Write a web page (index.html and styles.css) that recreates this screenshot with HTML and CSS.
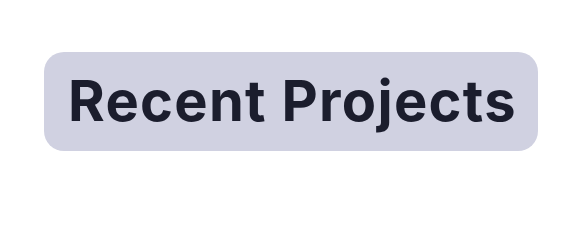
FILE: index.html
```html
<!DOCTYPE html>
<html>
<head>
<meta charset="utf-8">
<link rel="stylesheet" href="styles.css">
</head>
<body>
<div class="page">
  <span class="chip">Recent Projects</span>
</div>
</body>
</html>
```
FILE: styles.css
```css
html, body {
  margin: 0;
  padding: 0;
  background: #ffffff;
}
.page {
  display: flex;
  align-items: flex-start;
  padding: 52px 0 0 44px;
}
.chip {
  display: inline-flex;
  align-items: center;
  box-sizing: border-box;
  width: 494px;
  height: 99px;
  padding: 0 0 2px 24px;
  border-radius: 20px;
  background: #d0d1e1;
  color: #1b1d2d;
  font-family: Inter, "Noto Sans", sans-serif;
  font-weight: 650;
  font-size: 56px;
  letter-spacing: 1.3px;
  white-space: nowrap;
}
```
